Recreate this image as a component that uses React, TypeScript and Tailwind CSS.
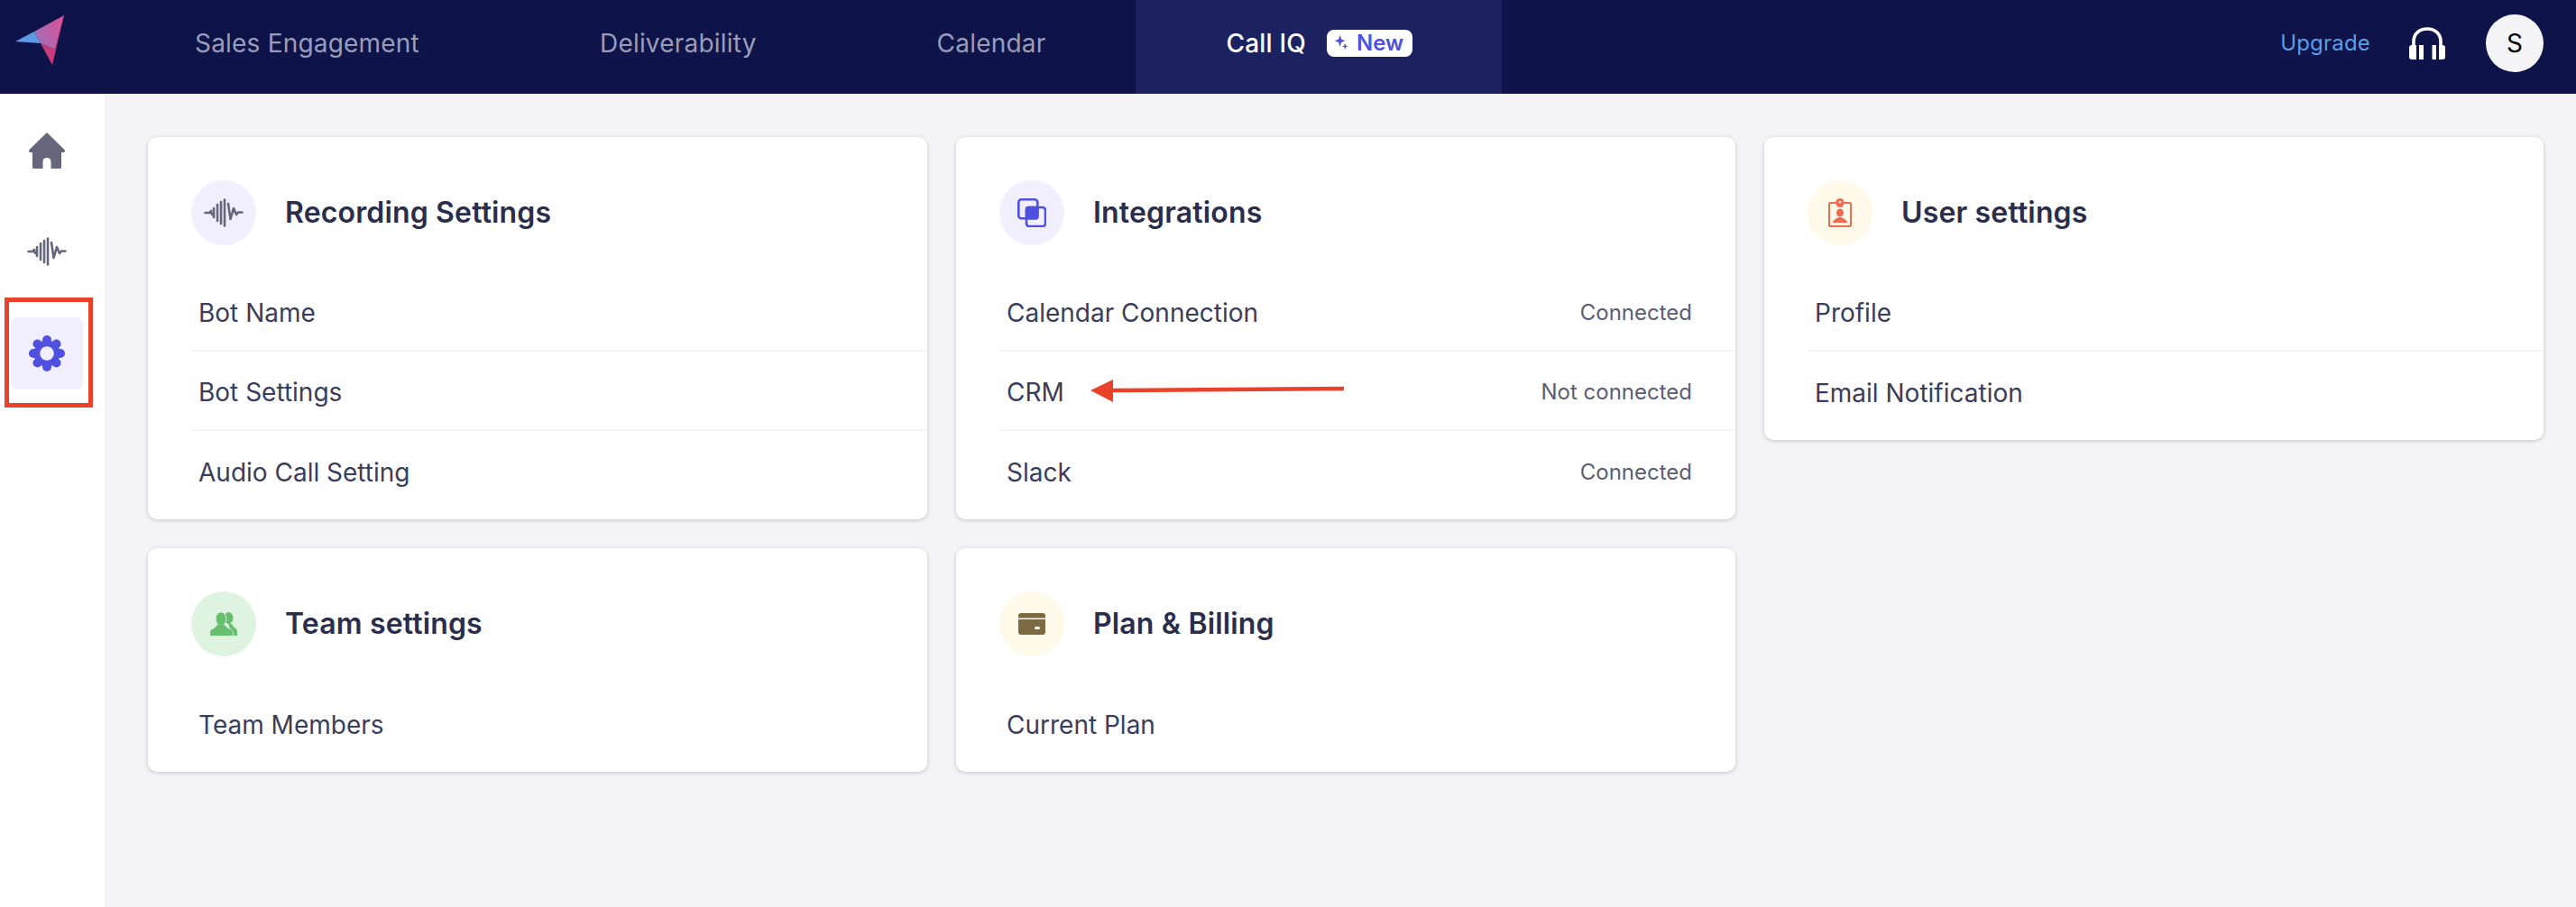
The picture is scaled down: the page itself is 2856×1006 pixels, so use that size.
import { ReactNode } from 'react';

const font = { fontFamily: 'Inter, "Noto Sans", sans-serif' };

function Logo() {
  return (
    <svg width="55" height="56" viewBox="0 0 55 56" className="block">
      <defs>
        <linearGradient id="logoTop" x1="0.1" y1="0.6" x2="1" y2="0.1">
          <stop offset="0" stopColor="#a76cb6" />
          <stop offset="1" stopColor="#dd4f95" />
        </linearGradient>
        <linearGradient id="logoLow" x1="0.2" y1="0" x2="0.7" y2="1">
          <stop offset="0" stopColor="#a8487f" />
          <stop offset="1" stopColor="#d8347a" />
        </linearGradient>
      </defs>
      <polygon points="54,0 21,18 28,31 44,38" fill="url(#logoTop)" />
      <polygon points="28,31 44,38 54,0 41,55" fill="url(#logoLow)" />
      <polygon points="0,29 21,18 28,31" fill="#5f9ae6" />
    </svg>
  );
}

function Sparkle() {
  return (
    <svg width="15" height="20" viewBox="0 0 16 20" fill="#4f4fe0">
      <path d="M6 0 L7.6 5.2 L12 7 L7.6 8.8 L6 14 L4.4 8.8 L0 7 L4.4 5.2 Z" />
      <path d="M12 10 L13 12.6 L15.6 13.6 L13 14.6 L12 17.4 L11 14.6 L8.4 13.6 L11 12.6 Z" />
    </svg>
  );
}

function Headphones() {
  return (
    <svg width="40" height="36" viewBox="0 0 40 36" fill="#fff">
      <path d="M5 20 V16 C5 7 12 2 20 2 C28 2 35 7 35 16 V20" fill="none" stroke="#fff" strokeWidth="3.6" />
      <path d="M3 20 H8 V36 H3 C1 36 0 35 0 33 V23 C0 21 1 20 3 20 Z" />
      <rect x="11" y="20" width="5" height="16" />
      <rect x="25.5" y="20" width="4.5" height="16" />
      <path d="M33 20 H37 C39 20 40 21 40 23 V33 C40 35 39 36 37 36 H33 Z" />
    </svg>
  );
}

function HomeIcon() {
  return (
    <svg width="40" height="40" viewBox="0 0 40 40" fill="#65667c">
      <path d="M20 0 L39.5 19 C40.5 20.5 40 22 38 22 H36 V38.5 C36 39.5 35.2 40 34 40 H24.5 V32 C24.5 29.5 22.5 28 20 28 C17.5 28 15.5 29.5 15.5 32 V40 H6 C4.8 40 4 39.5 4 38.5 V22 H2 C0 22 -0.5 20.5 0.5 19 Z" />
    </svg>
  );
}

function WaveIcon() {
  return (
    <svg width="44" height="32" viewBox="0 0 44 32" fill="none" stroke="#65667c" strokeWidth="2.6" strokeLinecap="round" strokeLinejoin="round">
      <path d="M1.5 16 H6 L8 14 L9 18" />
      <path d="M11 11 V21" />
      <path d="M15 7 V25" />
      <path d="M19 4 V28" />
      <path d="M23 1.5 V30.5" />
      <path d="M27 6 L29.5 23 L33 11 L36 18 L38 15.5 H42.5" />
    </svg>
  );
}

function GearIcon() {
  return (
    <svg width="40" height="40" viewBox="0 0 40 40">
      <g fill="#4f4fe0">
        <circle cx="20" cy="20" r="14.5" />
        <circle cx="20" cy="5" r="5" />
        <circle cx="20" cy="35" r="5" />
        <circle cx="5" cy="20" r="5" />
        <circle cx="35" cy="20" r="5" />
        <circle cx="9.5" cy="9.5" r="5" />
        <circle cx="30.5" cy="9.5" r="5" />
        <circle cx="9.5" cy="30.5" r="5" />
        <circle cx="30.5" cy="30.5" r="5" />
      </g>
      <circle cx="20" cy="20" r="7.8" fill="#f1effe" />
    </svg>
  );
}

function IntegrationIcon() {
  return (
    <svg width="32" height="32" viewBox="0 0 32 32" fill="none" stroke="#4f4fe0" strokeWidth="2.6">
      <rect x="1.3" y="1.3" width="21" height="21" rx="3" />
      <rect x="10" y="10" width="21" height="21" rx="3" />
      <rect x="10" y="10" width="12.3" height="12.3" rx="1.5" fill="#4f4fe0" />
    </svg>
  );
}

function BadgeIcon() {
  return (
    <svg width="26" height="32" viewBox="0 0 26 32">
      <rect x="1" y="5" width="24" height="26" rx="1.5" fill="none" stroke="#ee6c52" strokeWidth="2" />
      <rect x="8.5" y="0" width="9" height="10" rx="4.5" fill="#ee6c52" />
      <circle cx="13" cy="4" r="1.3" fill="#fff" />
      <ellipse cx="13" cy="16" rx="4" ry="4.6" fill="#ee6c52" />
      <path d="M5 27 C5 23.5 9 23 11 21 H15 C17 23 21 23.5 21 27 Z" fill="#ee6c52" />
    </svg>
  );
}

function TeamIcon() {
  return (
    <svg width="30" height="26" viewBox="0 0 30 26" fill="#66c06e">
      <ellipse cx="20.5" cy="6.5" rx="5" ry="6.5" />
      <path d="M20 13 H24 C25 17 30 18 30 21 V26 H22 V18 Z" />
      <ellipse cx="12" cy="7.5" rx="5.8" ry="7.5" stroke="#dff3e1" strokeWidth="1" />
      <path d="M0 26 V22 C0 19 6 18 8 14 H16 C18 18 24 19 25 22 V26 Z" stroke="#dff3e1" strokeWidth="1" />
      <ellipse cx="12" cy="7.5" rx="5.3" ry="7" />
      <path d="M0 26 V22 C0 19 6 18.5 8 14 H16 C18 18.5 24 19 24.5 22 V26 Z" />
    </svg>
  );
}

function CardIcon() {
  return (
    <svg width="30" height="24" viewBox="0 0 30 24">
      <path d="M3 0 H27 C28.8 0 30 1.2 30 3 V5.5 H0 V3 C0 1.2 1.2 0 3 0 Z" fill="#7d6a43" />
      <path d="M0 7 H30 V21 C30 22.8 28.8 24 27 24 H3 C1.2 24 0 22.8 0 21 Z" fill="#7d6a43" />
      <rect x="18" y="15" width="6" height="3" rx="1.5" fill="#fff" />
    </svg>
  );
}

type Row = { label: string; status?: string };

function SettingsCard({ title, icon, tint, rows }: { title: string; icon: ReactNode; tint: string; rows: Row[] }) {
  return (
    <div className="bg-white rounded-[10px] shadow-[0_1px_4px_rgba(40,42,80,0.25)] pt-12 pl-12 pb-[10px]">
      <div className="flex items-center h-[72px] mb-[30px]">
        <div className={`w-[72px] h-[72px] rounded-full flex items-center justify-center ${tint}`}>{icon}</div>
        <h2 className="ml-[32px] text-[32px] font-semibold tracking-[0.005em] text-[#2a2e4c]">{title}</h2>
      </div>
      <div className="divide-y-2 divide-[#f5f5f7]">
        {rows.map((row) => (
          <div key={row.label} className="h-[88px] flex items-center justify-between pt-[3px] pl-[8px] pr-[48px]">
            <span className="text-[28px] text-[#3a3d5a]">{row.label}</span>
            {row.status && <span className="text-[24px] text-[#5b5d72]">{row.status}</span>}
          </div>
        ))}
      </div>
    </div>
  );
}

export default function App() {
  return (
    <div className="relative h-[1006px] flex flex-col bg-[#f4f4f7] overflow-hidden" style={font}>
      <header className="h-[104px] flex items-center bg-[#0e1349] shrink-0">
        <div className="w-[116px] self-start pl-[17px] pt-[17px]">
          <Logo />
        </div>
        <nav className="flex h-full text-[28px] tracking-[0.2px] text-[#9a9db8]">
          <a className="flex items-center pb-[8px] px-[100px]">Sales Engagement</a>
          <a className="flex items-center pb-[8px] px-[100px]">Deliverability</a>
          <a className="flex items-center pb-[8px] px-[100px]">Calendar</a>
          <a className="flex items-center pb-[8px] w-[406px] pl-[100px] bg-[#1c2260] text-white font-medium">
            Call IQ
            <span className="ml-[23px] flex items-center gap-[9px] h-[30px] pl-[9px] pr-[10px] rounded-[8px] bg-white text-[24px] font-semibold tracking-normal text-[#4f4fe0]">
              <Sparkle />
              New
            </span>
          </a>
        </nav>
        <div className="ml-auto flex items-center pb-[8px] pr-[36px]">
          <span className="text-[24px] tracking-[0.2px] text-[#5c9ee8]">Upgrade</span>
          <span className="ml-[43px] flex"><Headphones /></span>
          <span className="ml-[45px] w-[64px] h-[64px] rounded-full bg-[#f4f4f7] shadow-[0_0_2px_rgba(0,0,0,0.25)] flex items-center justify-center text-[28px] text-black">S</span>
        </div>
      </header>
      <div className="flex flex-1">
        <aside className="w-[116px] bg-white shrink-0">
          <div className="ml-[12px] w-[80px] flex flex-col items-center">
            <div className="mt-[43px] flex"><HomeIcon /></div>
            <div className="mt-[76px] flex"><WaveIcon /></div>
            <div className="mt-[57px] w-[80px] h-[80px] rounded-[8px] bg-[#f1effe] flex items-center justify-center"><GearIcon /></div>
          </div>
        </aside>
        <main className="flex-1 pt-12 pl-12 pr-9">
          <div className="grid grid-cols-3 gap-8 items-start">
            <SettingsCard
              title="Recording Settings"
              tint="bg-[#f1effe]"
              icon={<WaveIcon />}
              rows={[{ label: 'Bot Name' }, { label: 'Bot Settings' }, { label: 'Audio Call Setting' }]}
            />
            <SettingsCard
              title="Integrations"
              tint="bg-[#f1effe]"
              icon={<IntegrationIcon />}
              rows={[
                { label: 'Calendar Connection', status: 'Connected' },
                { label: 'CRM', status: 'Not connected' },
                { label: 'Slack', status: 'Connected' },
              ]}
            />
            <SettingsCard
              title="User settings"
              tint="bg-[#fef9e9]"
              icon={<BadgeIcon />}
              rows={[{ label: 'Profile' }, { label: 'Email Notification' }]}
            />
            <SettingsCard title="Team settings" tint="bg-[#dff3e1]" icon={<TeamIcon />} rows={[{ label: 'Team Members' }]} />
            <SettingsCard title="Plan & Billing" tint="bg-[#fef9e9]" icon={<CardIcon />} rows={[{ label: 'Current Plan' }]} />
          </div>
        </main>
      </div>
      {/* annotations drawn over the page */}
      <div className="absolute left-[5px] top-[330px] w-[98px] h-[122px] border-[5px] border-[#e9412a]" />
      <svg className="absolute left-[1205px] top-[415px]" width="292" height="36" viewBox="0 0 292 36">
        <path d="M4 18 L29 6 V15.7 L285 13.7 V18.3 L29 20.3 V31 Z" fill="#e9412a" />
      </svg>
    </div>
  );
}
